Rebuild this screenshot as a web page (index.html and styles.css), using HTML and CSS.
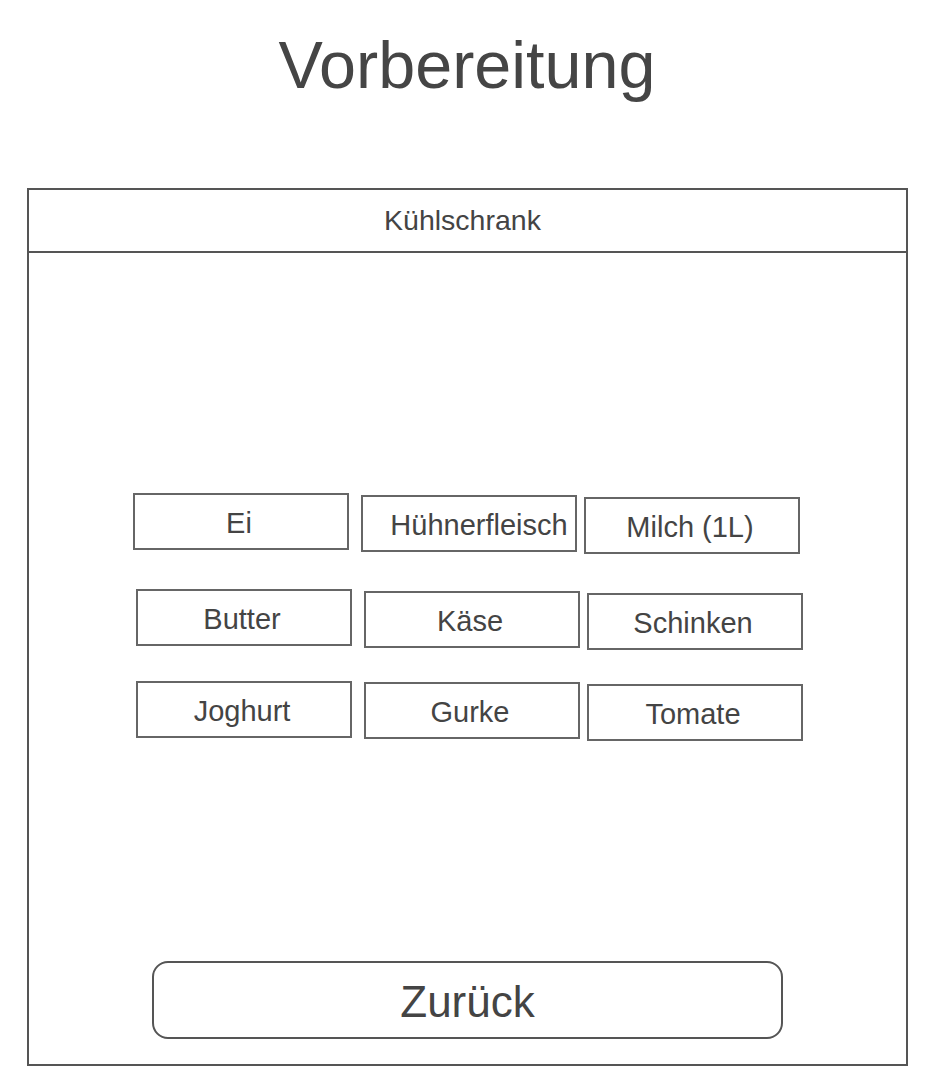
FILE: index.html
```html
<!DOCTYPE html>
<html lang="de">
<head>
  <meta charset="UTF-8">
  <meta name="viewport" content="width=device-width, initial-scale=1.0">
  <title>Vorbereitung</title>
  <link rel="stylesheet" href="styles.css">
</head>
<body>
  <h1 class="title">Vorbereitung</h1>

  <div class="fridge">
    <div class="fridge-header">Kühlschrank</div>

    <div class="fridge-body">
      <div class="item-row first">
        <div class="item">Ei</div>
        <div class="item wide-text">Hühnerfleisch</div>
        <div class="item">Milch (1L)</div>
      </div>

      <div class="item-row second">
        <div class="item">Butter</div>
        <div class="item">Käse</div>
        <div class="item">Schinken</div>
      </div>

      <div class="item-row third">
        <div class="item">Joghurt</div>
        <div class="item">Gurke</div>
        <div class="item">Tomate</div>
      </div>

      <button type="button" class="back-button">Zurück</button>
    </div>
  </div>
</body>
</html>
```

FILE: styles.css
```css
body {
  margin: 0;
  padding: 0;
  font-family: "Liberation Sans", Arial, sans-serif;
  color: #444;
  background: #fff;
}

.title {
  margin: 28px 0 0;
  text-align: center;
  font-size: 66.5px;
  font-weight: normal;
  line-height: 75px;
  color: #454545;
}

.fridge {
  box-sizing: border-box;
  width: 881px;
  margin: 85px 0 0 27px;
  border: 2px solid #555;
}

.fridge-header {
  height: 61px;
  padding-right: 10px;
  border-bottom: 2px solid #555;
  display: flex;
  justify-content: center;
  align-items: center;
  font-size: 28.5px;
}

.fridge-body {
  padding: 240px 0 25px 0;
}

.item-row {
  display: flex;
  align-items: flex-start;
}

.item-row.first {
  margin-left: 104px;
}

.item-row.second {
  margin-left: 107px;
  margin-top: 35px;
}

.item-row.third {
  margin-left: 107px;
  margin-top: 31px;
}

.item {
  box-sizing: border-box;
  width: 216px;
  height: 57px;
  padding: 3px 4px 0 0;
  border: 2px solid #666;
  display: flex;
  justify-content: center;
  align-items: center;
  font-size: 29px;
  white-space: nowrap;
}

.item:nth-child(2) {
  margin-left: 12px;
  margin-top: 2px;
}

.item:nth-child(3) {
  margin-left: 7px;
  margin-top: 4px;
}

.item-row.third .item:nth-child(2) {
  margin-top: 1px;
}

.item-row.third .item:nth-child(3) {
  margin-top: 3px;
}

.item.wide-text {
  padding: 3px 0 0 20px;
}

.back-button {
  display: block;
  box-sizing: border-box;
  width: 631px;
  height: 78px;
  margin: 220px 0 0 123px;
  padding-top: 5px;
  border: 2px solid #555;
  border-radius: 16px;
  background: #fff;
  font-family: "Liberation Sans", Arial, sans-serif;
  font-size: 44px;
  color: #444;
  cursor: pointer;
}
```
